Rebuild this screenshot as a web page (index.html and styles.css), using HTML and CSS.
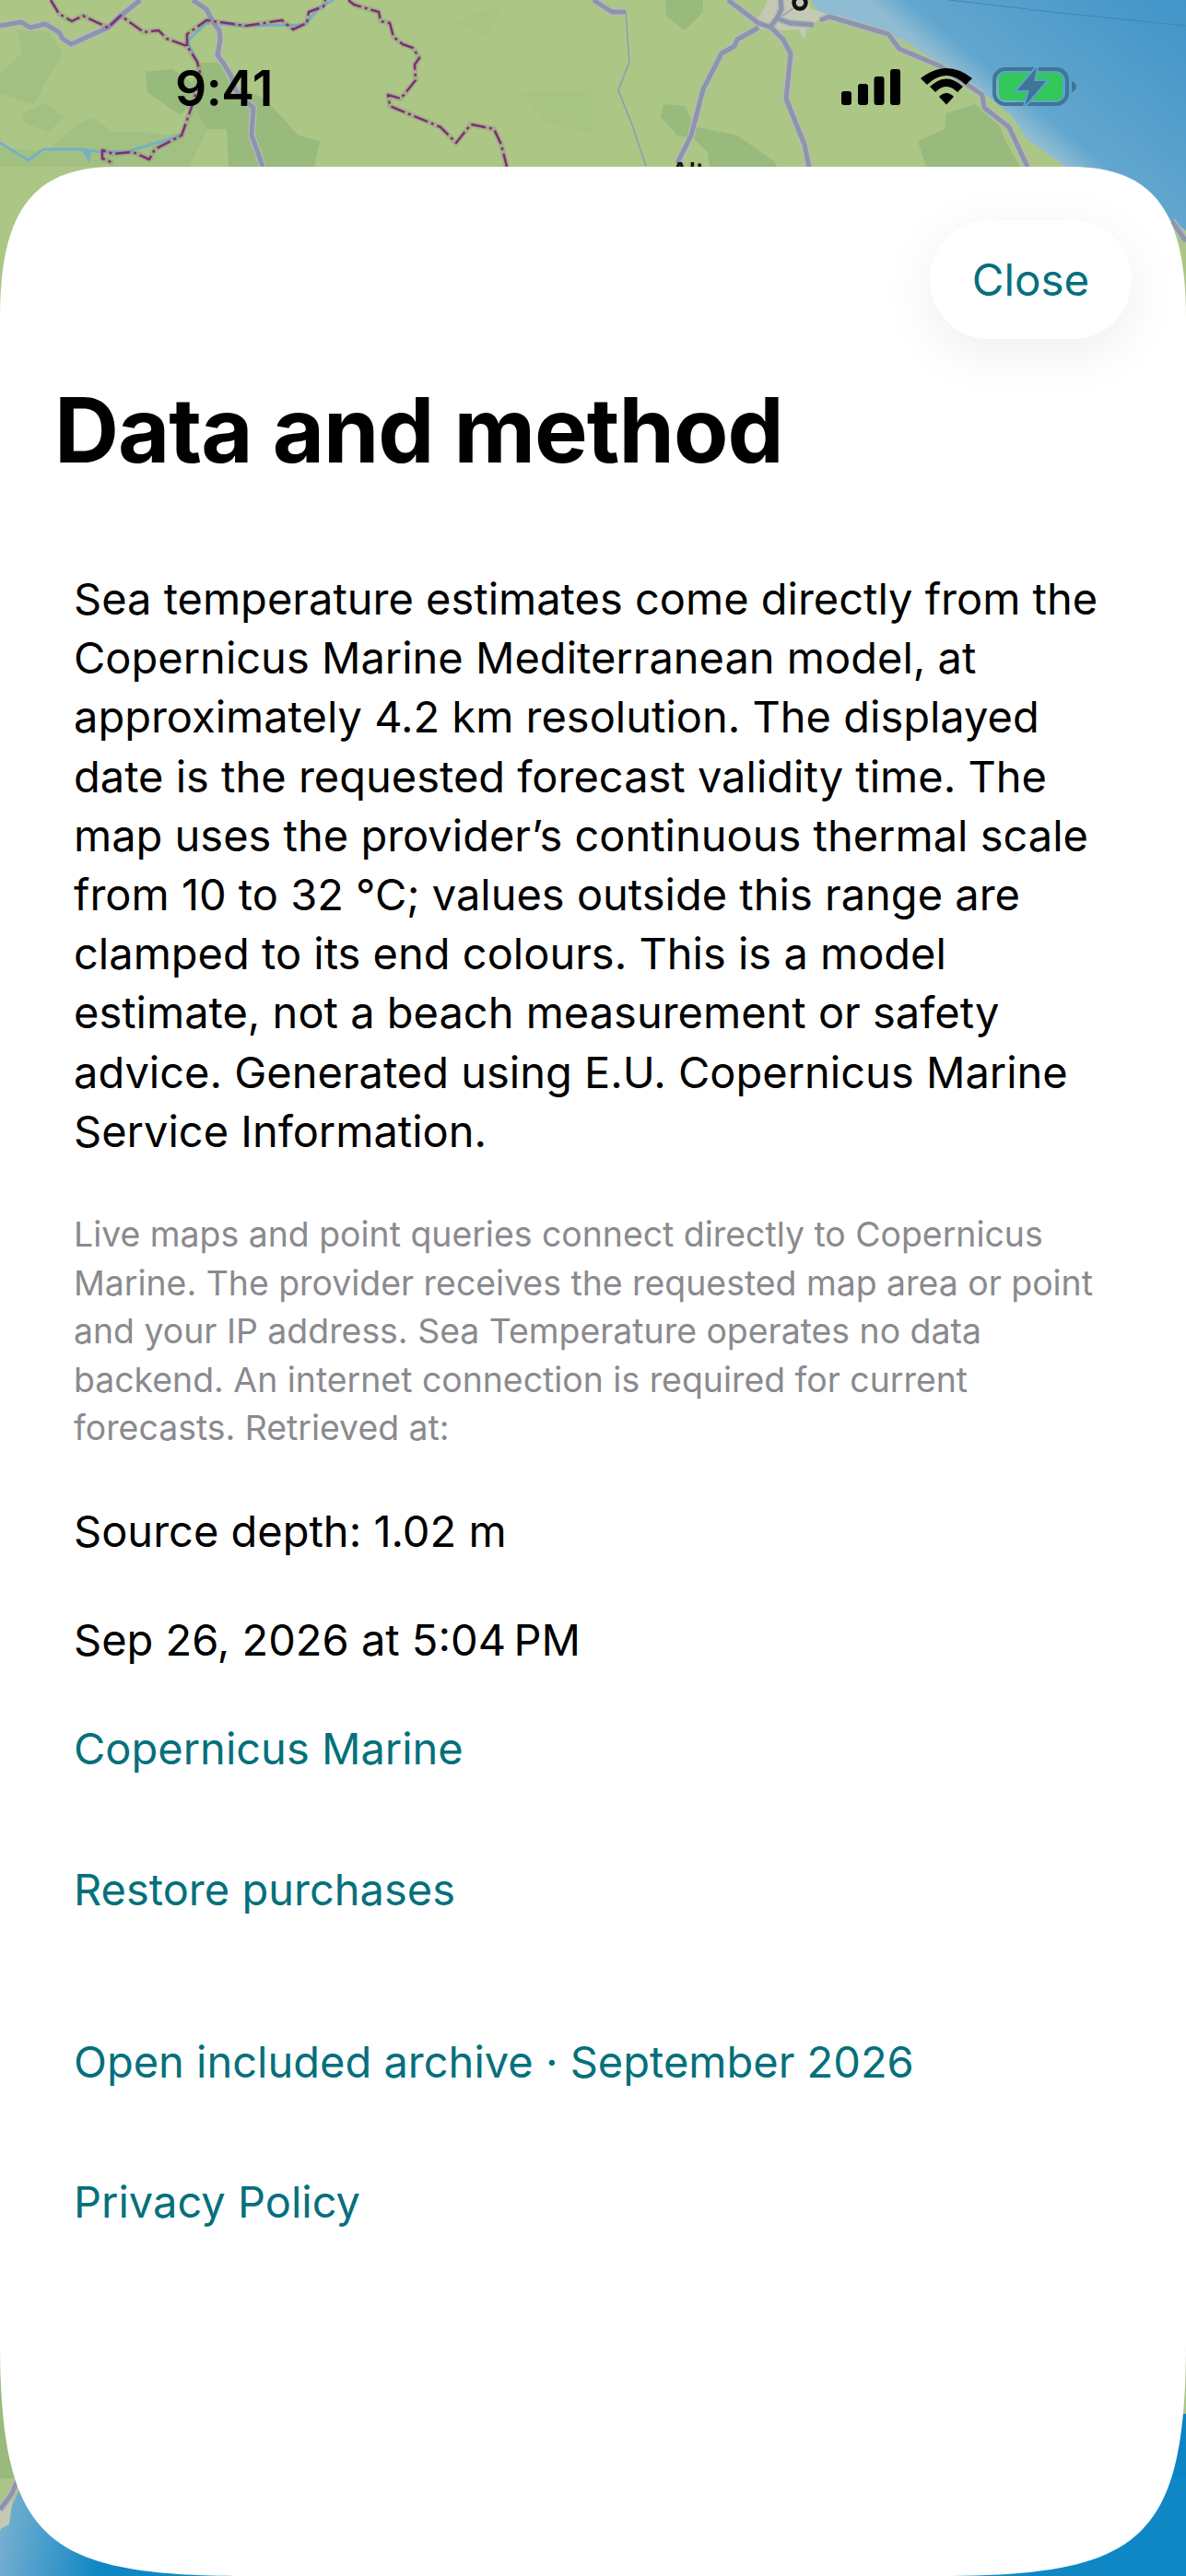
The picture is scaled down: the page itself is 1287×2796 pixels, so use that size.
FILE: index.html
```html
<!DOCTYPE html>
<html lang="en">
<head>
    <meta charset="UTF-8">
    <meta name="viewport" content="width=device-width, initial-scale=1.0">
    <title>Data and method</title>
    <link rel="stylesheet" href="styles.css">
</head>
<body>

    <!-- map behind the sheet -->
    <svg class="map" viewBox="0 0 1287 2796" aria-hidden="true">
        <defs>
            <linearGradient id="sea_top" gradientUnits="userSpaceOnUse" x1="1060" y1="100" x2="1284" y2="-170">
                <stop offset="0" stop-color="#8fbcd2"/>
                <stop offset="0.08" stop-color="#62a6ce"/>
                <stop offset="0.5" stop-color="#4898ca"/>
                <stop offset="1" stop-color="#2f8fc6"/>
            </linearGradient>
            <linearGradient id="sea_low" gradientUnits="userSpaceOnUse" x1="0" y1="2760" x2="110" y2="2780">
                <stop offset="0" stop-color="#74aed0"/>
                <stop offset="1" stop-color="#0f87c4"/>
            </linearGradient>
            <g id="roads">
                <path d="M0 28 L23 24 L33 30 L49 26 L64 35 L68 42 L77 48 L117 30 L131 17 L152 0"/>
                <path d="M209 0 L224 10 L232 25 L238 33 L239 43 L236 60 L242 68 L251 83 L255 97 L267 110 L275 117 L273 147 L279 163 L285 181"/>
                <path d="M644 0 L664 13 L679 13"/>
                <path d="M790 0 L823 25 L837 30 L850 43 L858 58 L853 107 L873 157 L878 181"/>
                <path d="M823 30 L800 43 L797 50 L783 58 L763 97 L750 147 L735 177"/>
                <path d="M847 0 L848 10 L843 20 L837 28 M843 20 L857 25 L883 27"/>
                <path d="M890 22 L900 18 L964 37 L976 53 L1021 72 L1066 103 L1068 117 L1095 138 L1115 181"/>
                <path d="M1272 240 L1287 262"/>
                <path d="M0 2724 L12 2708 L20 2690"/>
            </g>
            <g id="borders">
                <path d="M55 0 L64 15 L78 23 L90 17 L117 30 L131 17 L156 35 L172 33 L181 42 L203 50 L214 67 L218 83 L209 113 L197 147 L168 162 L162 173 L144 165 L123 167 L111 163 L111 172 L123 177"/>
                <path d="M203 50 L203 37 L224 22 L267 28 L306 22 L318 32 L333 25 L335 13 L351 7 L353 0"/>
                <path d="M378 0 L384 5 L411 13 L413 23 L423 25 L427 40 L437 48 L448 52 L455 63 L450 70 L451 87 L435 107 L421 103 L423 115 L478 138 L495 155 L511 135 L536 140 L544 157 L550 181"/>
            </g>
        </defs>

        <rect class="land" x="0" y="0" width="1287" height="2796"/>

        <!-- hills -->
        <g class="hill_light">
            <path d="M18 32 L53 35 L68 58 L49 90 L37 113 L0 102 L0 80 L25 57Z"/>
            <path d="M25 123 L49 112 L70 127 L53 143 L25 133Z"/>
            <path d="M82 137 L99 127 L123 143 L156 143 L181 147 L197 143 L209 113 L225 140 L205 181 H0 V160 L50 165Z"/>
            <path d="M563 100 L644 97 L644 147 L595 133Z" opacity="0.4"/>
            <path d="M493 23 L542 7 L530 40Z" opacity="0.4"/>
        </g>
        <g class="hill">
            <path d="M158 78 L187 75 L209 90 L214 68 L238 68 L250 90 L287 107 L324 147 L347 153 L341 181 L248 181 L246 140 L225 140 L209 113 L195 125 L160 100Z"/>
            <path d="M722 0 L763 0 L763 13 L743 33 L723 17Z"/>
            <path d="M720 113 L743 115 L753 137 L800 147 L840 175 L843 181 L770 181 L768 165 L752 150 L735 147 L717 127Z"/>
            <path d="M996 153 L1025 140 L1027 123 L1058 113 L1085 137 L1091 153 L1107 181 L1005 181Z"/>
            <path d="M0 2580 L18 2690 H0Z"/>
        </g>

        <!-- sea -->
        <path d="M880 0 L890 15 L980 43 L1025 72 L1070 103 L1099 127 L1113 150 L1156 181 L1265 236 L1287 250 V0Z" fill="url(#sea_top)"/>
        <path d="M1200 2620 H1287 V2796 H1200Z" fill="#0a84c3"/>
        <path d="M0 2748 L12 2722 L22 2700 L60 2690 H1287 V2796 H0Z" fill="url(#sea_low)"/>

        <path class="town" d="M833 0 L827 13 L822 20 L825 32 L843 33 L867 32 L873 43 L875 32 L890 20 L897 15 L880 10 L877 0Z"/>
        <path class="town" d="M0 2720 L15 2700 L10 2740 L0 2745Z"/>

        <g class="river">
            <path d="M0 155 L31 174 L47 162 L88 162 L109 165 L140 164 L197 147"/>
            <path d="M88 162 L99 162 L97 177Z" class="lake"/>
            <path d="M213 65 L203 45 L224 25 L265 28 L330 27 L347 8 L362 0"/>
            <path d="M1030 0 L1150 14 L1287 28" class="sea_line"/>
        </g>
        <path class="stream" d="M679 13 L683 67 L671 98 L685 133 L701 180"/>
        <path class="stream" d="M848 18 L862 8"/>

        <use href="#roads" class="road_case"/>
        <use href="#roads" class="road_core"/>
        <use href="#borders" class="border_case"/>
        <use href="#borders" class="border_core"/>

        <circle class="pin" cx="868" cy="3" r="6.500"/>
        <text class="place" x="728" y="196">Altamura</text>
    </svg>

    <header class="status_bar">
        <span class="clock">9:41</span>
        <div class="status_icons">
            <svg class="signal" viewBox="0 0 64 40">
                <rect x="0" y="25" width="11" height="15" rx="3"/>
                <rect x="18" y="17" width="11" height="23" rx="3"/>
                <rect x="35.500" y="9" width="11" height="31" rx="3"/>
                <rect x="53" y="1" width="11" height="39" rx="3"/>
            </svg>
            <svg class="wifi" viewBox="0 0 56 40">
                <path d="M0 11 Q28 -11 56 11 L49 18 Q28 -2 7 18Z"/>
                <path d="M10 20 Q28 3 46 20 L40 26 Q28 14 16 26Z"/>
                <path d="M20 31 Q28 23 36 31 L28 39.500Z"/>
            </svg>
            <svg class="battery" viewBox="0 0 92 42">
                <rect x="2" y="2" width="79" height="38" rx="12" fill="none" stroke="#3f7596" stroke-width="4"/>
                <rect x="7" y="6" width="69" height="30" rx="6" fill="#34c759"/>
                <path d="M48 0 L27 25 H40 L35 42 L58 15 H45Z" fill="#3f7596" stroke="#5aa2cb" stroke-width="4" paint-order="stroke"/>
                <path d="M86 15 Q91 17 91 21 Q91 25 86 27Z" fill="#3f7596"/>
            </svg>
        </div>
    </header>

    <main class="sheet">
        <div class="sheet_top">
            <button class="close_btn">Close</button>
        </div>

        <h1>Data and method</h1>

        <div class="content">
            <p class="body_text">Sea temperature estimates come directly from the Copernicus Marine Mediterranean model, at approximately 4.2 km resolution. The displayed date is the requested forecast validity time. The map uses the provider’s continuous thermal scale from 10 to 32 °C; values outside this range are clamped to its end colours. This is a model estimate, not a beach measurement or safety advice. Generated using E.U. Copernicus Marine Service Information.</p>

            <p class="note">Live maps and point queries connect directly to Copernicus Marine. The provider receives the requested map area or point and your IP address. Sea Temperature operates no data backend. An internet connection is required for current forecasts. Retrieved at:</p>

            <p class="line depth">Source depth: 1.02 m</p>
            <p class="line date">Sep 26, 2026 at 5:04&#8239;PM</p>

            <a class="link first" href="#">Copernicus Marine</a>
            <a class="link restore" href="#">Restore purchases</a>
            <a class="link archive" href="#">Open included archive · September 2026</a>
            <a class="link privacy" href="#">Privacy Policy</a>
        </div>
    </main>

</body>
</html>
```

FILE: styles.css
```css
html, body {
    margin: 0;
    padding: 0;
}

body {
    position: relative;
    width: 1287px;
    height: 2796px;
    overflow: hidden;
    font-family: Inter, "Liberation Sans", sans-serif;
    color: #000;
    background-color: #acc686;
}

/* map layer */
.map {
    position: absolute;
    top: 0;
    left: 0;
    width: 1287px;
    height: 2796px;
}

.land {
    fill: #acc686;
}

.hill_light {
    fill: #a2c082;
}

.hill {
    fill: #98ba7c;
}

.town {
    fill: #c5c9b4;
}

.river path {
    fill: none;
    stroke: #76b0c6;
    stroke-width: 3;
}

.river .lake {
    fill: #76b0c6;
    stroke: none;
}

.river .sea_line {
    stroke: #3f86b8;
    stroke-width: 1;
}

.stream {
    fill: none;
    stroke: #8b9db0;
    stroke-width: 1.500;
}

.road_case,
.road_core,
.border_case,
.border_core {
    fill: none;
    stroke-linejoin: round;
}

.road_case {
    stroke: #b4b9b8;
    stroke-width: 8;
}

.road_core {
    stroke: #8c95ab;
    stroke-width: 5;
}

.border_case {
    stroke: rgba(150, 130, 140, 0.35);
    stroke-width: 6;
}

.border_core {
    stroke: #7f2f73;
    stroke-width: 2.500;
    stroke-dasharray: 16 4 3 4;
}

.pin {
    fill: none;
    stroke: #111;
    stroke-width: 4.500;
}

.place {
    font-family: Inter, sans-serif;
    font-size: 27px;
    font-weight: 600;
    fill: #111;
}

/* status bar */
.status_bar {
    position: absolute;
    top: 0;
    left: 0;
    right: 0;
    z-index: 2;
    height: 181px;
}

.clock {
    position: absolute;
    left: 190px;
    top: 65px;
    font-size: 53.500px;
    line-height: 62px;
    font-weight: 600;
    letter-spacing: -0.5px;
}

.status_icons {
    position: absolute;
    left: 913px;
    top: 73px;
    display: flex;
    gap: 22px;
    align-items: center;
}

.signal {
    width: 64px;
    height: 40px;
}

.wifi {
    width: 56px;
    height: 40px;
}

.battery {
    width: 92px;
    height: 42px;
}

/* white sheet */
.sheet {
    position: absolute;
    top: 0;
    left: 0;
    width: 1287px;
    height: 2796px;
    box-sizing: border-box;
    padding-top: 239px;
    background-color: #fff;
    clip-path: path("M0 345 C0 230 35 181 125 181 H1162 C1252 181 1287 230 1287 345 V2540 C1287 2760 1237 2796 1017 2796 H270 C50 2796 0 2760 0 2540 Z");
}

.sheet_top {
    display: flex;
    justify-content: flex-end;
    padding-right: 59px;
}

.close_btn {
    width: 219px;
    height: 129px;
    padding: 0;
    border: none;
    border-radius: 64px;
    background-color: #fff;
    box-shadow: 0 14px 60px rgba(0, 0, 0, 0.07);
    color: #05707c;
    font-family: inherit;
    font-size: 47.500px;
    cursor: pointer;
}

h1 {
    margin: 44px 0 0 59px;
    font-size: 97px;
    line-height: 110px;
    font-weight: 700;
    letter-spacing: -1px;
}

.content {
    padding: 96px 80px 0;
}

.body_text {
    margin: 0;
    font-size: 47px;
    line-height: 64.200px;
}

.note {
    margin: 54px 0 0;
    font-size: 37.400px;
    line-height: 52.600px;
    color: #8a8a8e;
}

.line {
    margin: 0;
    font-size: 47px;
    line-height: 64px;
}

.depth {
    margin-top: 53px;
}

.date {
    margin-top: 54px;
}

.link {
    display: block;
    font-size: 47px;
    line-height: 64px;
    color: #05707c;
    text-decoration: none;
}

.first {
    margin-top: 54px;
}

.restore {
    margin-top: 89px;
}

.archive {
    margin-top: 123px;
}

.privacy {
    margin-top: 88px;
}
```
